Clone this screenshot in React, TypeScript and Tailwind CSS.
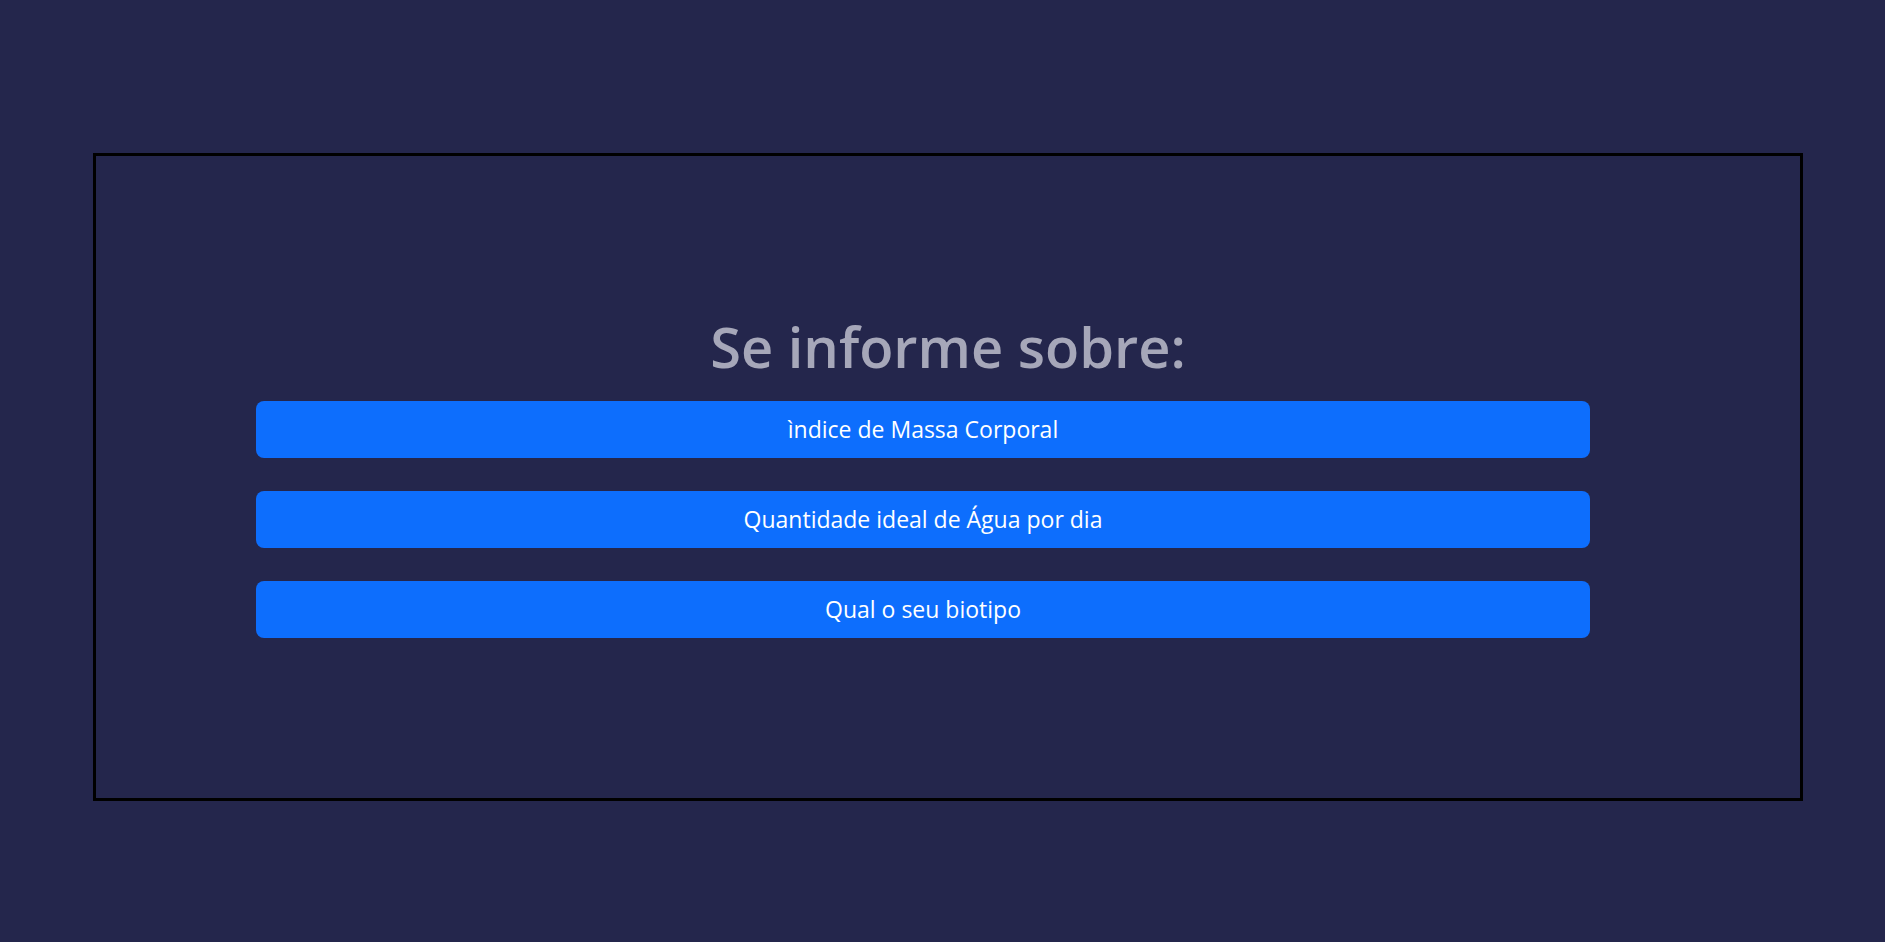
export default function App() {
  const topics = [
    'ìndice de Massa Corporal',
    'Quantidade ideal de Água por dia',
    'Qual o seu biotipo',
  ]

  return (
    <div
      className="min-h-screen w-full bg-[#24264c] pt-[153px] pl-[93px]"
      style={{ fontFamily: '"Open Sans", "Noto Sans", sans-serif' }}
    >
      <div className="w-[1710px] h-[648px] border-[3px] border-black pt-[154px]">
        <h1 className="text-center text-[56px] leading-[72px] font-semibold text-[#a6a7b9]">
          Se informe sobre:
        </h1>
        <div className="ml-[160px] mt-[19px] w-[1334px] flex flex-col gap-[33px]">
          {topics.map((t) => (
            <button
              key={t}
              className="h-[57px] w-full rounded-[8px] bg-[#0d6efd] text-white text-[23px]"
            >
              {t}
            </button>
          ))}
        </div>
      </div>
    </div>
  )
}
